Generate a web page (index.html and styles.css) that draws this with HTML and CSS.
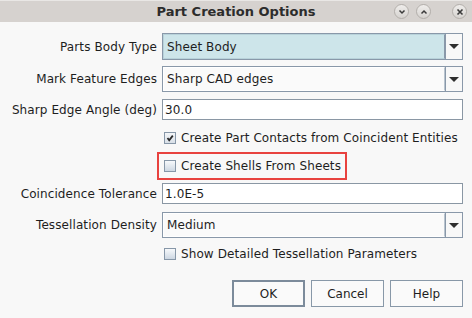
FILE: index.html
```html
<!DOCTYPE html>
<html lang="en">
<head>
    <meta charset="UTF-8">
    <meta name="viewport" content="width=device-width, initial-scale=1.0">
    <title>Part Creation Options</title>
    <link rel="stylesheet" href="styles.css">
</head>
<body>
    <div class="window">
        <header class="titlebar">
            <span></span>
            <span class="title">Part Creation Options</span>
            <div class="wm-buttons">
                <span class="wm-btn">
                    <svg width="8" height="8" viewBox="0 0 8 8"><path d="M1.5 2.5 L4 5 L6.5 2.5" fill="none" stroke="#3a3a3a" stroke-width="1.5"/></svg>
                </span>
                <span class="wm-btn">
                    <svg width="8" height="8" viewBox="0 0 8 8"><path d="M1.5 5.5 L4 3 L6.5 5.5" fill="none" stroke="#3a3a3a" stroke-width="1.5"/></svg>
                </span>
                <span class="wm-btn close">
                    <svg width="8" height="8" viewBox="0 0 8 8"><path d="M1.5 1.5 L6.5 6.5 M6.5 1.5 L1.5 6.5" fill="none" stroke="#3a3a3a" stroke-width="1.6"/></svg>
                </span>
            </div>
        </header>

        <div class="form">
            <div class="row row-body">
                <label>Parts Body Type</label>
                <div class="combo active">
                    <span class="value">Sheet Body</span>
                    <span class="arrow"></span>
                </div>
            </div>
            <div class="row row-edges">
                <label>Mark Feature Edges</label>
                <div class="combo">
                    <span class="value">Sharp CAD edges</span>
                    <span class="arrow"></span>
                </div>
            </div>
            <div class="row row-angle">
                <label>Sharp Edge Angle (deg)</label>
                <div class="textfield">30.0</div>
            </div>
            <div class="row row-check1">
                <span></span>
                <div class="check-item">
                    <span class="checkbox checked">
                        <svg width="10" height="10" viewBox="0 0 10 10"><path d="M2.5 5 L4.2 7.2 L7.8 2.6" fill="none" stroke="#2a2a2a" stroke-width="1.8"/></svg>
                    </span>
                    Create Part Contacts from Coincident Entities
                </div>
            </div>
            <div class="row row-check2">
                <span></span>
                <div class="check-item highlight">
                    <span class="checkbox"></span>
                    Create Shells From Sheets
                </div>
            </div>
            <div class="row row-tol">
                <label>Coincidence Tolerance</label>
                <div class="textfield">1.0E-5</div>
            </div>
            <div class="row row-density">
                <label>Tessellation Density</label>
                <div class="combo">
                    <span class="value">Medium</span>
                    <span class="arrow"></span>
                </div>
            </div>
            <div class="row row-check3">
                <span></span>
                <div class="check-item">
                    <span class="checkbox"></span>
                    Show Detailed Tessellation Parameters
                </div>
            </div>
            <div class="buttons">
                <button class="default">OK</button>
                <button>Cancel</button>
                <button>Help</button>
            </div>
        </div>
    </div>
</body>
</html>
```

FILE: styles.css
```css
* {
    box-sizing: border-box;
}

body {
    margin: 0;
    font-family: "DejaVu Sans", sans-serif;
    font-size: 12px;
    letter-spacing: 0.1px;
    color: #1e1e1e;
    background: #f8f8f8;
}

.window {
    width: 472px;
    height: 318px;
    background: #f8f8f8;
}

/* title bar */
.titlebar {
    height: 22px;
    display: grid;
    grid-template-columns: 1fr auto 1fr;
    align-items: center;
    background: #d6d2cf;
    border-top: 1px solid #e9e7e5;
}

.title {
    font-weight: bold;
    font-size: 13px;
    letter-spacing: 0;
    color: #2c2c2c;
}

.wm-buttons {
    justify-self: end;
    display: flex;
    align-items: center;
    gap: 7px;
    padding-right: 5px;
}

.wm-btn {
    width: 15px;
    height: 15px;
    border-radius: 50%;
    background: linear-gradient(#efedeb, #d6d3d0);
    border: 1px solid #b3afab;
    display: flex;
    align-items: center;
    justify-content: center;
}

.wm-btn.close {
    margin-left: 14px;
}

/* form */
.form {
    padding: 0 9px 0 10px;
}

.row {
    display: grid;
    grid-template-columns: 147px 1fr;
    column-gap: 5px;
    align-items: center;
}

.row label {
    text-align: right;
    white-space: nowrap;
}

.row-body { margin-top: 11px; }
.row-edges { margin-top: 6px; }
.row-angle { margin-top: 7px; }
.row-check1 { margin-top: 11px; }
.row-check2 { margin-top: 7px; }
.row-tol { margin-top: 3px; }
.row-density { margin-top: 8px; }
.row-check3 { margin-top: 9px; }

.combo {
    height: 26px;
    display: flex;
    border: 1px solid #8998a9;
    background: #fafafa;
}

.combo.active {
    height: 27px;
}

.combo .value {
    flex: 1;
    display: flex;
    align-items: center;
    padding-left: 3px;
    border: 1px solid #ffffff;
    border-right: 1px solid #b9c4cf;
}

.combo.active .value {
    background: #cde5ea;
    border-color: #b8d2da;
    border-right-color: #8998a9;
}

.combo .arrow {
    width: 17px;
    display: flex;
    align-items: center;
    justify-content: center;
    border-left: 1px solid #8998a9;
    background: #f8f8f8;
}

.combo .arrow::after {
    content: "";
    border-left: 5px solid transparent;
    border-right: 5px solid transparent;
    border-top: 5px solid #2e2e2e;
}

.textfield {
    height: 21px;
    display: flex;
    align-items: center;
    padding-left: 2px;
    background: #ffffff;
    border: 1px solid #8a97a4;
}

.check-item {
    display: flex;
    align-items: center;
    gap: 5px;
    margin-left: 2px;
    white-space: nowrap;
}

.check-item.highlight {
    justify-self: start;
    margin-left: -5px;
    height: 28px;
    padding: 0 4px 0 5px;
    border: 2px solid #e8423f;
}

.checkbox {
    width: 12px;
    height: 12px;
    border: 1px solid #8797a8;
    background: linear-gradient(#f7f9fb, #cdd7e2);
    display: flex;
    align-items: center;
    justify-content: center;
}

.checkbox.checked {
    background: linear-gradient(#f4f6f8, #d9e0e8);
}

/* bottom buttons */
.buttons {
    display: flex;
    justify-content: flex-end;
    gap: 6px;
    margin-top: 19px;
}

.buttons button {
    width: 73px;
    height: 27px;
    font-family: "DejaVu Sans", sans-serif;
    font-size: 12px;
    color: #1e1e1e;
    background: #fafafa;
    border: 1px solid #8898a8;
    border-radius: 0;
}

.buttons button.default {
    border: 2px solid #7c8b9b;
}
```
